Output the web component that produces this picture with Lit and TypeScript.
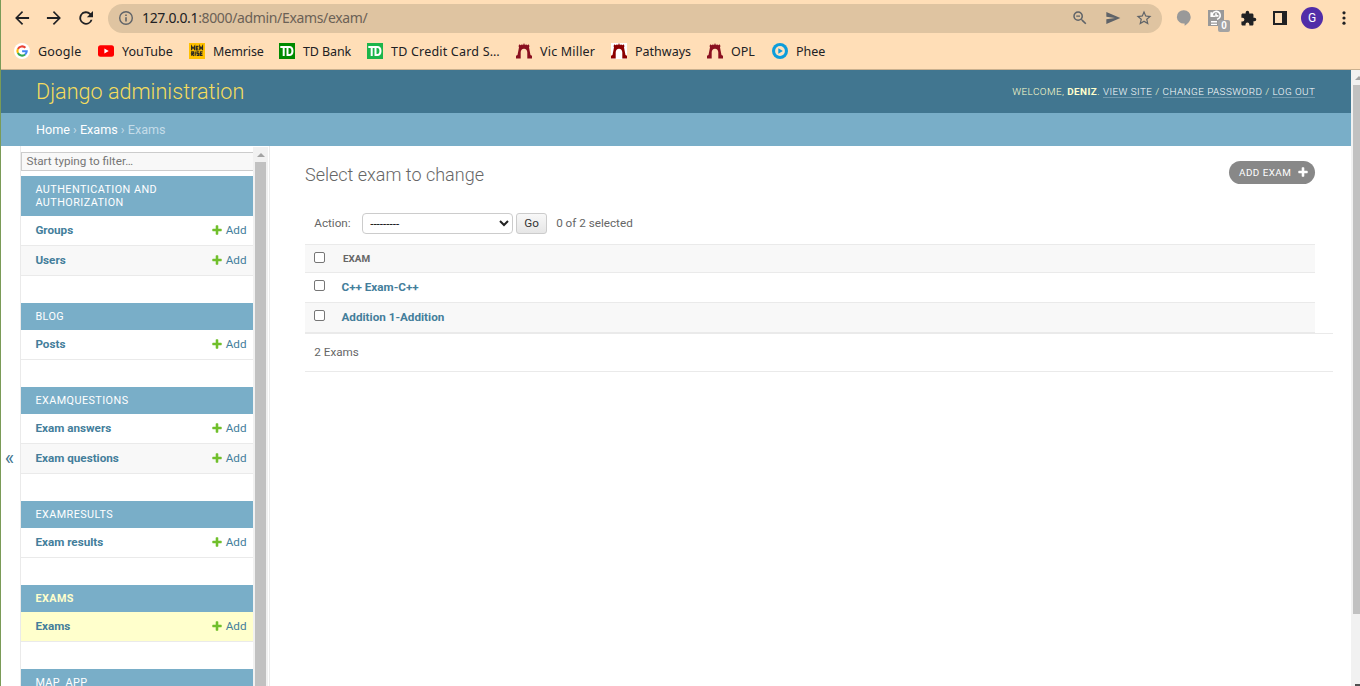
import { LitElement, html, css, svg, TemplateResult } from "lit";
import { customElement, property } from "lit/decorators.js";
import { classMap } from "lit/directives/class-map.js";

/* ---------- icons ---------- */

const icon = (size: number, box: string, body: TemplateResult) =>
  html`<svg width=${size} height=${size} viewBox=${box} fill="currentColor">${body}</svg>`;

const back = icon(20, "0 0 24 24", svg`<path d="M20.5 10.8H7.6l5.7-5.7L12 3.7 3.7 12l8.3 8.3 1.4-1.4-5.8-5.8h12.9z"/>`);
const forward = icon(20, "0 0 24 24", svg`<path d="M3.5 10.8h12.9l-5.7-5.7L12 3.7l8.3 8.3-8.3 8.3-1.4-1.4 5.8-5.8H3.5z"/>`);
const reload = icon(20, "0 0 24 24", svg`<path d="M17.65 6.35A8 8 0 1 0 19.73 14h-2.3A5.8 5.8 0 1 1 12 6.2c1.6 0 3 .66 4.05 1.75L13 11h7.4V3.6z"/>`);
const info = icon(16, "0 0 16 16", svg`<circle cx="8" cy="8" r="6.3" fill="none" stroke="currentColor" stroke-width="1.4"/><path d="M7.2 7.2h1.6v4.3H7.2zM7.2 4.5h1.6v1.6H7.2z"/>`);
const zoomOut = icon(18, "0 0 24 24", svg`<path d="M15.5 14h-.79l-.28-.27A6.47 6.47 0 0 0 16 9.5 6.5 6.5 0 1 0 9.5 16c1.61 0 3.09-.59 4.23-1.57l.27.28v.79l5 4.99L20.49 19zm-6 0C7.01 14 5 11.99 5 9.5S7.01 5 9.5 5 14 7.01 14 9.5 11.99 14 9.5 14M7 8.8h5v1.4H7z"/>`);
const send = icon(16, "0 0 24 24", svg`<path d="M2 21 23 12 2 3v7l13 2-13 2z"/>`);
const star = icon(18, "0 0 24 24", svg`<path d="m22 9.24-7.19-.62L12 2 9.19 8.63 2 9.24l5.46 4.73L5.82 21 12 17.27 18.18 21l-1.63-7.03zM12 15.4l-3.76 2.27 1-4.28-3.32-2.88 4.38-.38L12 6.1l1.71 4.04 4.38.38-3.32 2.88 1 4.28z"/>`);
const balloon = icon(18, "0 0 18 18", svg`<path fill="#999" d="M9 1.2a6.7 6.7 0 0 1 6.7 6.7c0 3.500-2.600 6.800-6.100 8.900v-2.300A6.700 6.700 0 1 1 9 1.200z"/>`);
const puzzle = icon(17, "0 0 24 24", svg`<path d="M20.500 11H19V7c0-1.100-.9-2-2-2h-4V3.500a2.500 2.500 0 0 0-5 0V5H4c-1.100 0-2 .9-2 2v3.800h1.500a2.700 2.700 0 0 1 0 5.400H2V20c0 1.100.9 2 2 2h3.800v-1.500a2.700 2.700 0 0 1 5.400 0V22H17c1.100 0 2-.9 2-2v-4h1.500a2.500 2.500 0 0 0 0-5"/>`);
const sidePanel = icon(14, "0 0 14 14", svg`<path fill-rule="evenodd" d="M0 0h14v14H0zm2 2v10h7V2z"/>`);
const kebab = icon(16, "0 0 16 16", svg`<circle cx="8" cy="2.800" r="1.600"/><circle cx="8" cy="8" r="1.600"/><circle cx="8" cy="13.200" r="1.600"/>`);
const restorePage = icon(16, "0 0 16 16", svg`<path fill="#999" d="M0 0h16v16H0z"/><path fill="none" stroke="#fff" stroke-width="1.600" d="M4.300 6.200A4 4 0 1 1 9 9.300 M3.200 2.200v4h3.900 M8 3.200v2.700h2.400"/><path fill="#fff" d="M3 11h6v1.500H3zM3 13.800h6v1.200H3z"/>`);
const cross = svg`<path d="M1600 796v192q0 40-28 68t-68 28h-416v416q0 40-28 68t-68 28H800q-40 0-68-28t-28-68v-416H288q-40 0-68-28t-28-68V796q0-40 28-68t68-28h416V284q0-40 28-68t68-28h192q40 0 68 28t28 68v416h416q40 0 68 28t28 68z"/>`;

/* ---------- favicons ---------- */

const google = icon(16, "0 0 16 16", svg`<circle cx="8" cy="8" r="8" fill="#fff"/><g fill="none" stroke-width="2.100"><path stroke="#ea4335" d="M3.900 5.900A4.700 4.700 0 0 1 11.400 4.800"/><path stroke="#fbbc05" d="M3.900 10.100a4.700 4.700 0 0 1 0-4.200"/><path stroke="#34a853" d="M3.900 10.100a4.700 4.700 0 0 0 7.200 1.400"/><path stroke="#4285f4" d="M8.100 8.200h4.600a4.600 4.600 0 0 1-1.600 3.300"/></g>`);
const youtube = icon(16, "0 0 16 16", svg`<rect y="2.300" width="16" height="11.400" rx="2.500" fill="#f00"/><path d="m6.400 5.500 4.300 2.500-4.300 2.500z" fill="#fff"/>`);
const memrise = icon(16, "0 0 16 16", svg`<path fill="#ffc100" d="M0 0h16v16H0z"/><g fill="none" stroke="#2b2a22" stroke-width="1.200"><path d="M2.600 7.300V3.200l1.500 2.300 1.500-2.300v4.100M9.500 3.300H7.300v3.600h2.200M7.300 5.100h1.900M10.800 7.300V3.200l1.300 2.300 1.400-2.300v4.100M2.700 12.800V8.900h1.700v1.700H2.900l2 2.200M6.200 8.400v4.400M9.900 8.900H8v1.700h1.800v1.800H7.700M13.600 8.900h-2.200v3.400h2.200M11.400 10.600h1.900"/></g>`);
const td = (fill: string) => icon(16, "0 0 16 16", svg`<path fill=${fill} d="M0 0h16v16H0z"/><path fill="#fff" fill-rule="evenodd" d="M1.300 3h9c2.600 0 4.200 1.800 4.200 5s-1.600 5-4.200 5H7.500V5H5.700v8H3.700V5H1.300zM9.500 5v6h.9c1.300 0 2-1 2-3s-.7-3-2-3z"/>`);
const arch = (fill: string, plate: string) => icon(16, "0 0 16 16", svg`<path fill=${plate} d="M0 0h16v16H0z"/><path fill=${fill} d="M2.500 3 3.500 1.300l1.200 1L6 1.200l1 1L8 0l1 2.200 1-1 1.300 1.100 1.200-1 1 1.700-.5 1.200.6 3.300.9 4.500 1.500.8v2.700h-4.700V9.500C11.300 7.200 10 5.800 8 5.800S4.700 7.200 4.700 9.500v6H0v-2.700l1.500-.8.9-4.500L3 4.200z"/>`);
const phee = icon(16, "0 0 16 16", svg`<circle cx="8" cy="8" r="8" fill="#0d9ddb"/><circle cx="8" cy="8" r="4.900" fill="#ffe3c0"/><path fill="#0d9ddb" d="m6.300 5.200 4.600 2.800-4.600 2.800z"/>`);

interface Bookmark { label: string; icon: TemplateResult; width: number; spacing: number }

const bookmarks: Bookmark[] = [
  { label: "Google", icon: google, width: 84, spacing: 0.2 },
  { label: "YouTube", icon: youtube, width: 91, spacing: 0.05 },
  { label: "Memrise", icon: memrise, width: 90, spacing: -0.1 },
  { label: "TD Bank", icon: td("#008a00"), width: 88, spacing: -0.1 },
  { label: "TD Credit Card S…", icon: td("#1cb54b"), width: 149, spacing: 0.2 },
  { label: "Vic Miller", icon: arch("#8a1020", "none"), width: 95, spacing: 0.2 },
  { label: "Pathways", icon: arch("#8b0000", "#fff"), width: 96, spacing: 0 },
  { label: "OPL", icon: arch("#8a1020", "none"), width: 65, spacing: 0 },
  { label: "Phee", icon: phee, width: 60, spacing: 0 },
];

@customElement("browser-bar")
export class BrowserBar extends LitElement {
  static styles = css`
    :host { display: block; height: 69px; background: #ffdeb7; border-bottom: 1px solid #c9b08f; color: #202124; font-family: "Noto Sans", sans-serif; }
    svg { display: block; flex: none; }
    .nav { display: flex; align-items: center; padding: 3px 7px 0 11px; box-sizing: border-box; height: 34px; }
    .nav > svg { margin: -1px 12px 0 0; }
    .address { display: flex; align-items: center; width: 1054px; flex: none; height: 29px; box-sizing: border-box; padding: 0 10px 1px; border-radius: 15px; background: #dfc4a1; color: #5f6368; }
    .url { flex: 1; margin-left: 8px; font-size: 14px; line-height: 20px; color: #6b6156; letter-spacing: -0.35px; }
    .host { color: #202124; }
    .tools { display: flex; align-items: center; gap: 14px; margin-right: -1px; }
    .tools svg:first-child { margin-right: 1.500px; }
    .tools svg:nth-child(2) { margin-right: 0.500px; }
    .extensions { display: flex; align-items: center; flex: 1; margin: -1px 0 0 13px; }
    .restore { position: relative; margin-left: 15px; }
    .count { position: absolute; left: 10px; top: 10px; width: 12px; height: 12px; border-radius: 2px; background: #a3a3a3; color: #fff; font: bold 10px/12px "Liberation Sans", sans-serif; text-align: center; }
    .puzzle { margin-left: 16px; }
    .panel { margin-left: 16px; }
    .avatar { margin-left: 14px; width: 22px; height: 22px; border-radius: 50%; background: #512da8; color: #fff; font: 12px/22px Roboto, sans-serif; text-align: center; }
    .menu { margin-left: 13px; }
    .bookmarks { display: flex; align-items: center; height: 34px; padding-left: 13px; }
    .bookmark { display: flex; align-items: center; gap: 8px; flex: none; font-size: 12.5px; line-height: 18px; white-space: nowrap; }
    .bookmark span { padding-top: 1px; }
  `;

  render() {
    return html`
      <div class="nav">
        ${back}${forward}${reload}
        <div class="address">
          ${info}
          <div class="url"><span class="host">127.0.0.1</span>:8000/admin/Exams/exam/</div>
          <div class="tools">${zoomOut}${send}${star}</div>
        </div>
        <div class="extensions">
          ${balloon}
          <div class="restore">${restorePage}<span class="count">0</span></div>
          <div class="puzzle">${puzzle}</div>
          <div class="panel">${sidePanel}</div>
          <div class="avatar">G</div>
          <div class="menu">${kebab}</div>
        </div>
      </div>
      <div class="bookmarks">
        ${bookmarks.map(b => html`<div class="bookmark" style="width:${b.width}px;letter-spacing:${b.spacing}px">${b.icon}<span>${b.label}</span></div>`)}
      </div>`;
  }
}

/* ---------- scrollbar ---------- */

@customElement("scroll-track")
export class ScrollTrack extends LitElement {
  @property({ type: Number }) thumb = 100;
  @property({ type: Boolean }) down = false;
  static styles = css`
    :host { display: flex; flex-direction: column; align-items: center; width: 15px; flex: none; background: #f1f1f1; overflow: hidden; }
    .arrow { height: 15px; flex: none; display: flex; align-items: center; }
    .up { border: 4px solid transparent; border-top: 0; border-bottom: 4px solid #a3a3a3; }
    .thumb { width: 11px; flex: none; background: #c1c1c1; }
    .end { margin-top: auto; width: 7px; height: 2px; flex: none; background: #505050; }
  `;
  render() {
    return html`<div class="arrow"><div class="up"></div></div>
      <div class="thumb" style="height:${this.thumb}px"></div>
      ${this.down ? html`<div class="end"></div>` : ""}`;
  }
}

/* ---------- navigation sidebar ---------- */

interface AppGroup { name: string; models: string[]; current?: boolean }

const apps: AppGroup[] = [
  { name: "Authentication and Authorization", models: ["Groups", "Users"] },
  { name: "Blog", models: ["Posts"] },
  { name: "Examquestions", models: ["Exam answers", "Exam questions"] },
  { name: "Examresults", models: ["Exam results"] },
  { name: "Exams", models: ["Exams"], current: true },
  { name: "Map_App", models: [] },
];

@customElement("nav-sidebar")
export class NavSidebar extends LitElement {
  static styles = css`
    :host { display: flex; width: 269px; flex: none; box-sizing: border-box; border-right: 1px solid #eaeaea; overflow: hidden; font-size: 11.7px; }
    .toggle { display: flex; align-items: center; justify-content: center; width: 20px; box-sizing: border-box; padding-right: 2px; height: 624px; flex: none; border-right: 1px solid #eaeaea; color: #417690; font-size: 20px; }
    .list { width: 232px; flex: none; padding-top: 6px; }
    .filter { height: 17px; line-height: 17px; border: 1px solid #ccc; border-right: 0; background: #f8f8f8; color: #757575; padding-left: 4.500px; margin-bottom: 5px; font-size: 11.700px; }
    .group { margin-bottom: 27px; }
    .caption { background: #79aec8; color: #fff; font-size: 10.800px; font-weight: 400; line-height: 13px; padding: 7px 60px 7px 14.400px; letter-spacing: .45px; text-transform: uppercase; }
    .current .caption { color: #ffc; font-weight: 700; }
    .row { display: flex; align-items: center; justify-content: space-between; height: 29px; padding: 0 6.500px 0 14.400px; border-bottom: 1px solid #eaeaea; color: #447e9b; }
    .row:nth-child(odd) { background: #f8f8f8; }
    .current .row { background: #ffc; }
    .name { font-weight: 700; margin-top: -1px; }
    .add { display: flex; align-items: center; gap: 3px; margin-top: -1px; }
    .add svg { fill: #70bf2b; }
    scroll-track { margin-top: 1px; }
  `;
  render() {
    return html`
      <div class="toggle">«</div>
      <div class="list">
        <div class="filter">Start typing to filter…</div>
        ${apps.map(a => html`<div class=${classMap({ group: true, current: !!a.current })}>
          <div class="caption">${a.name}</div>
          ${a.models.map(m => html`<div class="row"><span class="name">${m}</span><span class="add"><svg width="12" height="12" viewBox="0 0 1792 1792">${cross}</svg>Add</span></div>`)}
        </div>`)}
      </div>
      <scroll-track .thumb=${600}></scroll-track>`;
  }
}

/* ---------- change list ---------- */

@customElement("change-list")
export class ChangeList extends LitElement {
  static styles = css`
    :host { display: block; flex: 1; padding: 15px 36px 0 35px; font-size: 11.7px; color: #666; }
    .top { display: flex; justify-content: space-between; height: 48px; }
    h1 { margin: 2px 0 0; font-size: 18px; font-weight: 300; line-height: 24px; color: #666; }
    .new { display: flex; align-items: center; gap: 6px; width: 86px; height: 23px; box-sizing: border-box; padding: 0 0 1px 10px; border-radius: 12px; background: #888; color: #fff; font-size: 9.900px; letter-spacing: .45px; white-space: nowrap; }
    .new svg { fill: #fff; flex: none; }
    .actions { display: flex; align-items: center; height: 25px; padding: 2px 0 8px 9.300px; }
    .actions > span { margin-top: -1px; }
    .select { display: flex; align-items: center; justify-content: space-between; width: 151px; height: 21px; box-sizing: border-box; margin: 0 3px 0 11.500px; padding: 0 3px 0 7px; border: 1px solid #ccc; border-radius: 4px; background: #fff; color: #000; }
    button { width: 31px; height: 21px; margin: 0 9px 0 0; padding: 0 0 1px; border: 1px solid #ccc; border-radius: 3px; background: linear-gradient(#f8f8f8, #e6e6e6); font: inherit; line-height: 18px; color: #333; }
    .table { border-top: 1px solid #eaeaea; }
    .row { display: flex; align-items: flex-start; height: 29px; padding-left: 9px; border-bottom: 1px solid #eaeaea; color: #447e9b; font-weight: 700; }
    .row:nth-child(odd) { background: #f8f8f8; }
    .head { height: 27px; color: #666; font-size: 9.900px; }
    .row span { line-height: 29px; margin-left: 16.500px; }
    .head span { line-height: 28px; margin-left: 18px; text-transform: uppercase; }
    input { appearance: none; width: 11px; height: 11px; box-sizing: border-box; margin: 7px 0 0; border: 1px solid #767676; border-radius: 2px; background: #fff; }
    .total { height: 37px; margin-right: -18px; padding-left: 9.300px; line-height: 37px; border-top: 1px solid #eaeaea; border-bottom: 1px solid #eaeaea; }
  `;
  render() {
    return html`
      <div class="top">
        <h1>Select exam to change</h1>
        <div class="new">ADD EXAM<svg width="12" height="12" viewBox="0 0 1792 1792">${cross}</svg></div>
      </div>
      <div class="actions">
        <span>Action:</span>
        <div class="select"><span>---------</span><svg width="10" height="7" viewBox="0 0 10 7" fill="none" stroke="#222" stroke-width="2"><path d="m1 1 4 4 4-4"/></svg></div>
        <button>Go</button><span>0 of 2 selected</span>
      </div>
      <div class="table">
        <div class="row head"><input type="checkbox"><span>Exam</span></div>
        <div class="row"><input type="checkbox"><span>C++ Exam-C++</span></div>
        <div class="row"><input type="checkbox"><span>Addition 1-Addition</span></div>
      </div>
      <div class="total">2 Exams</div>`;
  }
}

@customElement("app-root")
export class AppRoot extends LitElement {
  static styles = css`
    :host { display: flex; flex-direction: column; height: 686px; box-sizing: border-box; border-left: 1px solid #7a9b57; background: #fff; overflow: hidden; font-family: Roboto, sans-serif; }
    browser-bar { flex: none; }
    .viewport { display: flex; flex: 1; min-height: 0; }
    .page { flex: 1; display: flex; flex-direction: column; min-width: 0; }
    header { display: flex; align-items: center; justify-content: space-between; height: 43px; flex: none; padding: 0 35.600px 0 35px; background: #417690; color: #ffc; }
    .brand { font-size: 21.600px; font-weight: 300; color: #f5dd5d; }
    .user { font-size: 9.900px; font-weight: 300; letter-spacing: .45px; text-transform: uppercase; }
    .user b { font-weight: 700; }
    .user a { color: #fff; border-bottom: 1px solid rgba(255, 255, 255, .25); }
    .crumbs { height: 33px; line-height: 33px; flex: none; padding-left: 35px; background: #79aec8; color: #c4dce8; font-size: 12.600px; }
    .crumbs a { color: #fff; }
    .main { display: flex; flex: 1; min-height: 0; }
    .edge { width: 9px; flex: none; overflow: hidden; display: flex; }
  `;
  render() {
    return html`
      <browser-bar></browser-bar>
      <div class="viewport">
        <div class="page">
          <header>
            <div class="brand">Django administration</div>
            <div class="user">Welcome, <b>Deniz</b>. <a>View site</a> / <a>Change password</a> / <a>Log out</a></div>
          </header>
          <div class="crumbs"><a>Home</a> › <a>Exams</a> › Exams</div>
          <div class="main"><nav-sidebar></nav-sidebar><change-list></change-list></div>
        </div>
        <div class="edge"><scroll-track .thumb=${529} .down=${true}></scroll-track></div>
      </div>`;
  }
}
